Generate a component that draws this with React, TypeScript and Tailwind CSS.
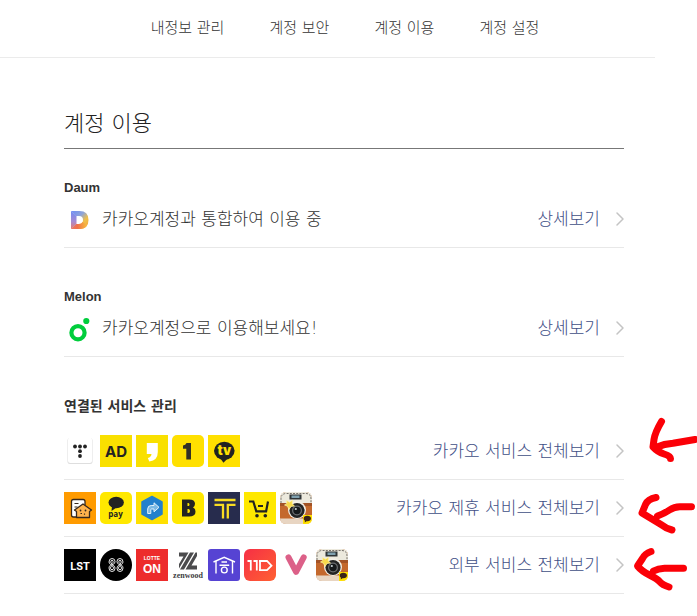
import type { ReactNode } from 'react';
import { ChevronRight } from 'lucide-react';

interface Service {
  name: string;
  icon: ReactNode;
}

interface ServiceGroup {
  label: string;
  services: Service[];
}

const Icon = ({ bg = 'none', r = 0, children }: { bg?: string; r?: number; children: ReactNode }) => (
  <svg viewBox="0 0 32 32" className="block size-8" aria-hidden="true">
    <rect width="32" height="32" rx={r} fill={bg} />
    {children}
  </svg>
);

const DaumIcon = () => (
  <Icon>
    <defs>
      <linearGradient id="daumTop" x1="0" y1="0" x2="1" y2="1">
        <stop offset="0" stopColor="#6f8df5" />
        <stop offset="0.4" stopColor="#8fa5d8" />
        <stop offset="0.65" stopColor="#f0c04a" />
        <stop offset="1" stopColor="#f4a03c" />
      </linearGradient>
      <linearGradient id="daumBottom" x1="0" y1="0" x2="1" y2="0">
        <stop offset="0" stopColor="#e87a6c" />
        <stop offset="0.4" stopColor="#f0704a" />
        <stop offset="1" stopColor="#f8be3c" />
      </linearGradient>
      <linearGradient id="daumLeft" x1="0" y1="0" x2="0" y2="1">
        <stop offset="0" stopColor="#6f8df5" />
        <stop offset="0.6" stopColor="#a98bd0" />
        <stop offset="1" stopColor="#e87a6c" />
      </linearGradient>
    </defs>
    <path d="M7 8h8.500q9 0 9 9t-9 9H7l5-5h3q4 0 4-4t-4-4h-3z" fill="url(#daumTop)" />
    <path d="M7 26l5-5h3q2.500 0 3.500-2l4.500 3q-2.200 4-7.500 4z" fill="url(#daumBottom)" />
    <path d="M7 8l5.500 5v8L7 26z" fill="url(#daumLeft)" />
  </Icon>
);

const MelonIcon = () => (
  <Icon>
    <circle cx="14" cy="20.700" r="6.600" fill="none" stroke="#00cd3c" strokeWidth="4.200" />
    <circle cx="22.300" cy="9" r="3.100" fill="#00cd3c" />
  </Icon>
);

const CameraIcon = () => (
  <Icon bg="#c4682c" r={6}>
    <path d="M0 11V6q0-6 6-6h20q6 0 6 6v5z" fill="#ece9dd" />
    <path d="M0 11h32v3H0z" fill="#a35326" />
    <path d="M0 26.500h32q-.5 5.500-6 5.500H6q-5.500 0-6-5.500z" fill="#e8d5c2" />
    <path d="M1 11V7q0-5.500 5.500-5.500h19Q31 1.500 31 7v4" fill="none" stroke="#77716b" strokeWidth="1" strokeDasharray="2 1.200" />
    <rect x="9.500" y="2.500" width="12" height="5" fill="#2f3436" />
    <rect x="11.500" y="3.500" width="8" height="2.500" fill="#7fa0ae" />
    <circle cx="17" cy="18" r="9" fill="#f3efe6" />
    <circle cx="17" cy="18.500" r="7.600" fill="#232323" />
    <circle cx="17" cy="18.500" r="5" fill="#6a6d70" />
    <circle cx="17" cy="18.500" r="3.700" fill="#15181a" />
    <circle cx="15.800" cy="17" r="1.100" fill="#c9d2d6" />
    <path d="M6.500 8.500l3 1.700 3-2-.3 3.600 2.300 2.200-3.500.5-2 3-1.500-3.300L4.500 13l2.300-1.500z" fill="#f8d94a" stroke="#fff3a8" strokeWidth=".7" />
    <path d="M23 23h9v3q0 6-6 6h-3z" fill="#ffe000" />
    <ellipse cx="27.300" cy="26.500" rx="3.600" ry="2.700" fill="#3a2418" />
    <path d="M25 28l-.3 2.500 2.500-1.800z" fill="#3a2418" />
  </Icon>
);

const kakaoServices: Service[] = [
  {
    name: 'Tistory',
    icon: (
      <Icon>
        <rect x="3.500" y="3" width="25" height="26" rx="2.500" fill="#dedede" />
        <rect x="4" y="2.500" width="24" height="25.500" rx="2.500" fill="#fff" />
        <g fill="#222">
          <circle cx="11" cy="11.500" r="1.900" />
          <circle cx="16" cy="11.500" r="1.900" />
          <circle cx="21" cy="11.500" r="1.900" />
          <circle cx="16" cy="16.200" r="1.900" />
          <circle cx="16" cy="21" r="1.900" />
        </g>
      </Icon>
    ),
  },
  {
    name: 'Kakao AD',
    icon: (
      <Icon bg="#f9e000">
        <text x="16" y="21.500" textAnchor="middle" fill="#222" className="font-['Inter'] text-[15px] font-bold">AD</text>
      </Icon>
    ),
  },
  {
    name: 'Kakao Story',
    icon: (
      <Icon bg="#f9e000">
        <path d="M10.800 8h11v9q0 8.500-8.500 9.500l-1.500-3.500q3.500-1 3.700-4h-4.700z" fill="#fff" />
      </Icon>
    ),
  },
  {
    name: 'Daum 1boon',
    icon: (
      <Icon bg="#ffe000" r={5}>
        <path d="M14.500 8H19v16.500h-4.700V13.800H11v-3.300q2.700-.3 3.500-2.500z" fill="#333026" />
      </Icon>
    ),
  },
  {
    name: 'Kakao TV',
    icon: (
      <Icon bg="#ffe000">
        <ellipse cx="16.300" cy="15.800" rx="10.300" ry="9" fill="#222" />
        <path d="M12 23h8l-4.500 4.800z" fill="#222" />
        <text x="16.300" y="19.800" textAnchor="middle" fill="#ffe000" className="font-['Inter'] text-[13px] font-black">tv</text>
      </Icon>
    ),
  },
];

const partnerServices: Service[] = [
  {
    name: 'Kakao Home',
    icon: (
      <Icon bg="#ff9b00">
        <rect x="7.500" y="7.500" width="13.500" height="17.500" rx="2" fill="#fff" stroke="#38291d" strokeWidth="1.300" />
        <path d="M10.500 11.500h4M10.500 15h3M10.500 18.500h2" stroke="#38291d" strokeWidth="1.200" />
        <path d="M19 12l8.500 6-2 1.500V25.500h-13v-6l-2-1.500z" fill="#ffb34d" stroke="#38291d" strokeWidth="1.300" strokeLinejoin="round" />
        <circle cx="16.500" cy="18.500" r=".9" fill="#38291d" />
        <circle cx="21.500" cy="18.500" r=".9" fill="#38291d" />
        <path d="M16.500 21.500h1.500M20.500 21.500v1.300" stroke="#38291d" strokeWidth="1.200" />
      </Icon>
    ),
  },
  {
    name: 'Kakao Pay',
    icon: (
      <Icon bg="#ffe800" r={5}>
        <ellipse cx="16.200" cy="10.500" rx="7.700" ry="5.700" fill="#222" />
        <path d="M12 14l-.5 5 5-3.500z" fill="#222" />
        <text x="15.500" y="25" textAnchor="middle" fill="#222" className="font-['Open_Sans'] text-[8px] font-bold">pay</text>
      </Icon>
    ),
  },
  {
    name: 'Kakao Navi',
    icon: (
      <Icon bg="#ffe000">
        <path d="M16 4.500L26 10v12L16 27.500 6 22V10z" fill="#2380cd" stroke="#2380cd" strokeWidth="1.500" strokeLinejoin="round" />
        <path d="M11.700 21.500v-4.500q0-3.500 3.500-3.500h2.800v-2.700l5 4.500-5 4.500V17h-2.500q-.7 0-.7.700v3.800z" fill="#7db9e3" stroke="#e4f2fb" strokeWidth="1" strokeLinejoin="round" />
      </Icon>
    ),
  },
  {
    name: 'Brunch',
    icon: (
      <Icon bg="#ffe800" r={5}>
        <path d="M10 7.500h7q6 0 6 4.300 0 2.500-2 3.700 2.500 1 2.500 4.200 0 4.800-6.500 4.800h-7z" fill="#222" />
        <path d="M15.500 11v3h.7q1.300 0 1.300-1.500T16.200 11zM15.500 17v4h.7q1.800 0 1.800-2t-1.800-2z" fill="#ffe800" />
      </Icon>
    ),
  },
  {
    name: 'Kakao T',
    icon: (
      <Icon bg="#272c4d">
        <path d="M6.500 8h21M6.500 12.800H15V26.500M27.500 12.800h-7.700V26.500" fill="none" stroke="#f8dc22" strokeWidth="2.300" />
      </Icon>
    ),
  },
  {
    name: 'Kakao Shopping',
    icon: (
      <Icon bg="#ffe800">
        <path d="M5 9.500h4.300l3 9.800h9.800l1.900-9.800M14 14h5" fill="none" stroke="#222" strokeWidth="2.200" />
        <circle cx="13" cy="23.700" r="1.800" fill="#222" />
        <circle cx="21.300" cy="23.700" r="1.800" fill="#222" />
      </Icon>
    ),
  },
  { name: 'Camera', icon: <CameraIcon /> },
];

const externalServices: Service[] = [
  {
    name: 'LST',
    icon: (
      <Icon bg="#000">
        <text x="16" y="21" textAnchor="middle" fill="#fff" className="font-['Roboto'] text-[11px] font-bold">LST</text>
      </Icon>
    ),
  },
  {
    name: 'SS',
    icon: (
      <Icon>
        <circle cx="16" cy="16" r="16" fill="#000" />
        <g fill="none" stroke="#fff" strokeWidth=".9">
          <path d="M9 13q0-3.500 3-3.500t3 3q0 1.500-1.500 2.700l-2 1.700q-1 1-1 2.300 0 1.500 1.500 1.500t1.500-1.500q0-1.200-1-2.200l-2-1.600Q9 14.200 9 13z" />
          <path d="M10.800 13q0-1.700 1.200-1.700t1.200 1.500q0 .8-1.200 1.900l-1.800 1.700Q9 17.500 9 19q0 3.500 3 3.500t3-3.300q0-1.500-1.300-2.700l-1.900-1.700q-1-.9-1-1.800z" />
          <path d="M23 13q0-3.500-3-3.500t-3 3q0 1.500 1.500 2.700l2 1.700q1 1 1 2.300 0 1.500-1.500 1.500t-1.500-1.500q0-1.200 1-2.200l2-1.600Q23 14.200 23 13z" />
          <path d="M21.200 13q0-1.700-1.200-1.700t-1.200 1.500q0 .8 1.200 1.900l1.800 1.700Q23 17.500 23 19q0 3.500-3 3.500t-3-3.300q0-1.500 1.300-2.700l1.900-1.700q1-.9 1-1.800z" />
        </g>
      </Icon>
    ),
  },
  {
    name: 'Lotte ON',
    icon: (
      <Icon bg="#ed2c2c">
        <text x="16" y="11" textAnchor="middle" fill="#fff" className="font-['Liberation_Sans'] text-[5px] font-bold">LOTTE</text>
        <text x="16" y="24" textAnchor="middle" fill="#fff" className="font-['Liberation_Sans'] text-[12px] font-bold">ON</text>
      </Icon>
    ),
  },
  {
    name: 'zenwood',
    icon: (
      <Icon>
        <path d="M7 3.500h9.500L7 19.500v-4.500l4.500-7.500H7zM18 3.500h4L12 20.500H8zM23.500 3.500H25V7l-5.500 9.500H25v4H13.500z" fill="#4b4b4d" />
        <text x="16" y="28.500" textAnchor="middle" fill="#3d3d3f" className="font-['Liberation_Serif'] text-[8px] font-bold">zenwood</text>
      </Icon>
    ),
  },
  {
    name: 'Home',
    icon: (
      <Icon bg="#5643d3" r={3}>
        <g fill="none" stroke="#fff" strokeWidth="1.400">
          <path d="M5.500 13L16.200 8.300 27 13" />
          <path d="M8 12v12.500M24.500 12v12.500M13.500 13h5.500M11.500 16.200h9.700" />
          <circle cx="16.300" cy="21" r="2.900" />
        </g>
      </Icon>
    ),
  },
  {
    name: '11st',
    icon: (
      <Icon bg="url(#elevenBg)" r={6}>
        <defs>
          <linearGradient id="elevenBg" x1="0" y1="0" x2="1" y2="1">
            <stop offset="0" stopColor="#f62f45" />
            <stop offset="1" stopColor="#ff6032" />
          </linearGradient>
        </defs>
        <path d="M3.500 12h3.300v9.500M9.500 12h3.300v9.500M15 12h8l4.500 4.700-4.500 4.500h-8M16 12v9" fill="none" stroke="#fff" strokeWidth="1.800" />
      </Icon>
    ),
  },
  {
    name: 'V',
    icon: (
      <Icon>
        <path d="M8.500 8.300l7.600 14.500L23.700 8.300" fill="none" stroke="#dc6088" strokeWidth="6" strokeLinecap="round" strokeLinejoin="round" />
      </Icon>
    ),
  },
  { name: 'Camera', icon: <CameraIcon /> },
];

const navItems = ['내정보 관리', '계정 보안', '계정 이용', '계정 설정'];

const accounts = [
  { title: 'Daum', text: '카카오계정과 통합하여 이용 중', icon: <DaumIcon /> },
  { title: 'Melon', text: '카카오계정으로 이용해보세요!', icon: <MelonIcon /> },
];

const serviceGroups: ServiceGroup[] = [
  { label: '카카오 서비스 전체보기', services: kakaoServices },
  { label: '카카오 제휴 서비스 전체보기', services: partnerServices },
  { label: '외부 서비스 전체보기', services: externalServices },
];

const MoreLink = ({ children }: { children: ReactNode }) => (
  <a href="#" className="ml-auto flex items-center gap-2 text-[17px] leading-6 text-[#3f4f86]">
    {children}
    <ChevronRight className="-mr-2 size-6 text-[#c4c4c4]" strokeWidth={1.5} />
  </a>
);

// hand-drawn red marks pointing at the three "view all" links
const RedArrows = () => (
  <svg
    viewBox="627 410 70 190"
    className="pointer-events-none absolute top-[410px] left-[627px] h-[190px] w-[70px]"
    fill="none"
    stroke="#fb0007"
    strokeWidth="7"
    strokeLinecap="round"
    strokeLinejoin="round"
    aria-hidden="true"
  >
    <path d="M661.500 421.500q-6.500 11-7.500 18l-1 7.500q4.500 5 11 7t6.500 4.500M657 447q7-3 16-3.700l22-3.800" />
    <path d="M656 497.500q-8 1.500-10.500 7l-3.500 8.500 19 11.500q5 4 11 5.500M657.500 516q7-2.500 12-6t11-3.300h11" />
    <path d="M651 551.500q-6 2-8.500 7l-5 7.500q4 5 12 9t10.500 7 9 5M653.500 571q4.500-2.500 11-2.700h19" />
  </svg>
);

export default function App() {
  return (
    <div className="relative bg-white font-['DejaVu_Sans','Noto_Sans_CJK_KR',sans-serif] font-light text-[#333]">
      <header className="mr-[42px] border-b border-[#ebebeb]">
        <nav className="flex h-[57px] items-center justify-center gap-[45px] pl-[35px] text-[15px]">
          {navItems.map((item) => (
            <a key={item} href="#" className="whitespace-nowrap">
              {item}
            </a>
          ))}
        </nav>
      </header>

      <main className="mr-[73px] ml-16 pt-[50px]">
        <h1 className="border-b border-[#777] pb-2 text-[22px] leading-8 text-[#222]">계정 이용</h1>

        <div className="flex flex-col gap-[39px] pt-[29px]">
          {accounts.map((account) => (
            <section key={account.title}>
              <h2 className="font-['Liberation_Sans',sans-serif] text-[13px] leading-5 font-bold">{account.title}</h2>
              <div className="flex items-center border-b border-[#e8e8e8] pt-[5px] pb-3">
                {account.icon}
                <p className="ml-1.5 text-[17px] leading-6">{account.text}</p>
                <MoreLink>상세보기</MoreLink>
              </div>
            </section>
          ))}

          <section>
            <h2 className="text-sm leading-5 font-bold">연결된 서비스 관리</h2>
            <ul className="mt-[7px]">
              {serviceGroups.map((group) => (
                <li key={group.label} className="flex items-center border-b border-[#e8e8e8] py-3">
                  <div className="flex gap-1">
                    {group.services.map((service) => (
                      <span key={service.name}>{service.icon}</span>
                    ))}
                  </div>
                  <MoreLink>{group.label}</MoreLink>
                </li>
              ))}
            </ul>
          </section>
        </div>
      </main>

      <RedArrows />
    </div>
  );
}
